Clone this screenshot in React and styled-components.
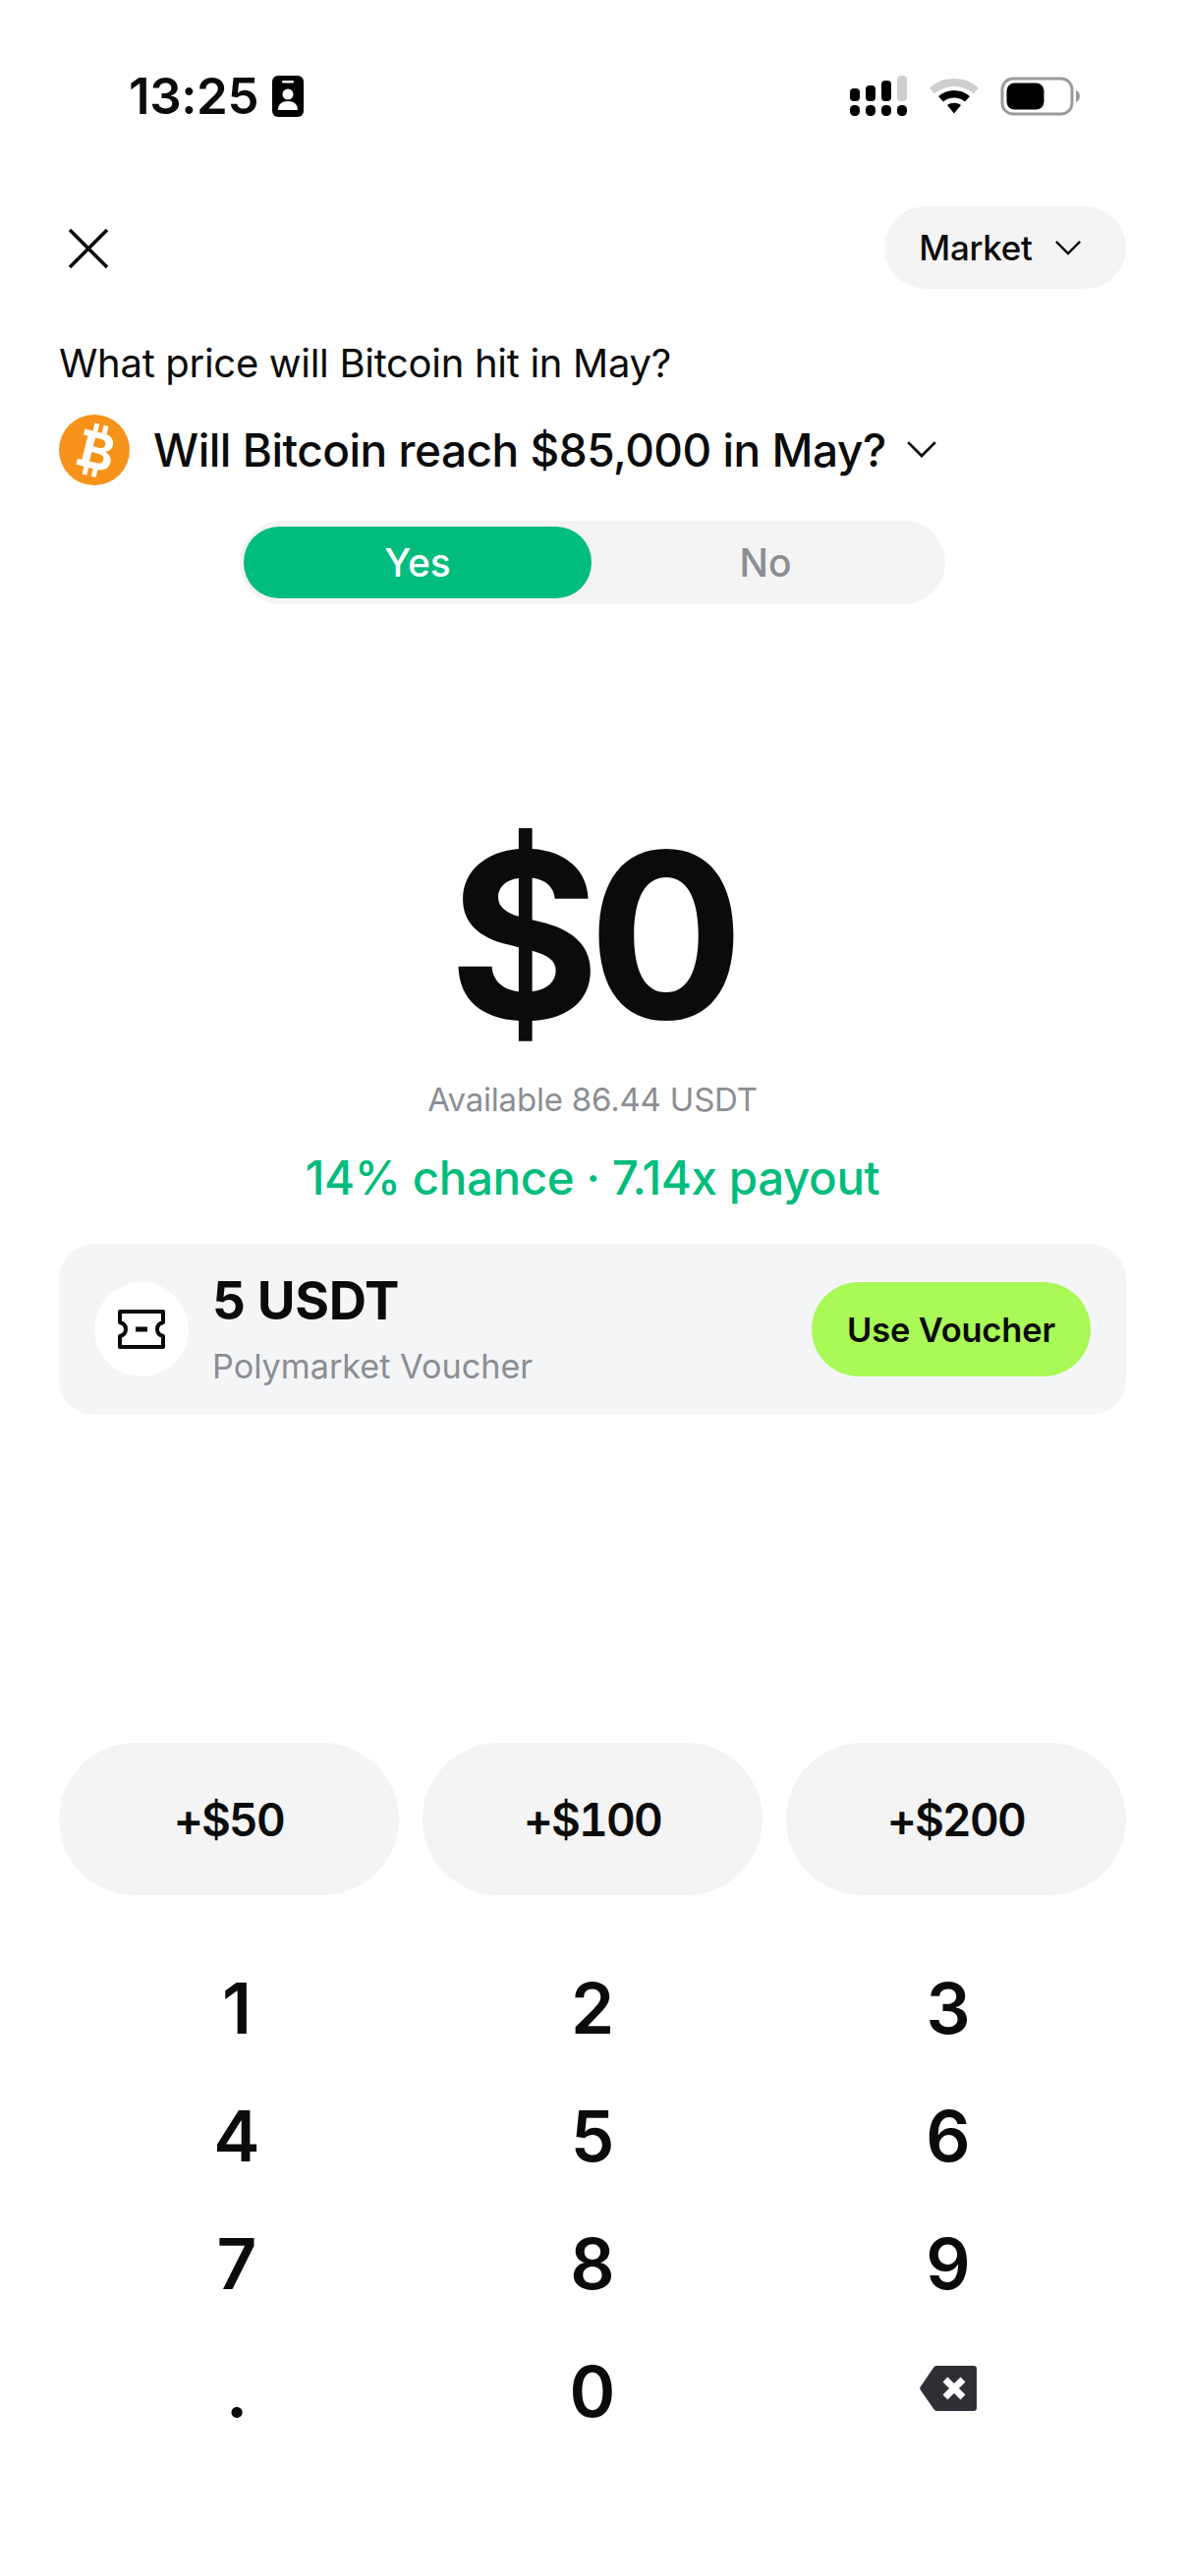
import React from 'react';
import styled, { createGlobalStyle } from 'styled-components';

const GlobalStyle = createGlobalStyle`
  html, body {
    margin: 0;
    padding: 0;
    background: #fff;
    font-family: Inter, "Liberation Sans", sans-serif;
    color: #0b0b0b;
  }
`;

const Page = styled.div`
  width: 1206px;
  height: 2622px;
  overflow: hidden;
  display: flex;
  flex-direction: column;
  background: #fff;
`;

const StatusBar = styled.div`
  height: 76px;
  margin-top: 70px;
  padding: 0 106px 0 131px;
  display: flex;
  align-items: flex-start;
  justify-content: space-between;
`;

const TimeGroup = styled.div`
  display: flex;
  align-items: center;
  gap: 14px;
  height: 56px;
`;

const Time = styled.span`
  font-size: 51px;
  font-weight: 600;
  letter-spacing: -0.4px;
  line-height: 56px;
`;

const StatusIcons = styled.div`
  display: flex;
  align-items: center;
  gap: 22px;
  height: 56px;
`;

const TopRow = styled.div`
  margin-top: 64px;
  padding: 0 60px;
  height: 84px;
  display: flex;
  align-items: center;
  justify-content: space-between;
`;

const CloseButton = styled.button`
  border: 0;
  background: none;
  padding: 0;
  margin-left: 8px;
  margin-top: 2px;
  width: 44px;
  height: 44px;
  display: flex;
`;

const MarketPill = styled.div`
  width: 246px;
  height: 84px;
  box-sizing: border-box;
  padding-right: 10px;
  border-radius: 42px;
  background: #f4f4f4;
  display: flex;
  align-items: center;
  justify-content: center;
  gap: 22px;
  font-size: 35px;
  font-weight: 500;
  letter-spacing: -0.3px;
`;

const Question = styled.div`
  margin-top: 51px;
  padding: 0 60px;
  font-size: 40px;
  line-height: 50px;
  font-weight: 400;
  letter-spacing: -0.3px;
`;

const TitleRow = styled.div`
  margin-top: 27px;
  padding: 0 60px;
  height: 72px;
  display: flex;
  align-items: center;
`;

const CoinIcon = styled.div`
  width: 72px;
  height: 72px;
  border-radius: 50%;
  background: #f7931a;
  display: flex;
  align-items: center;
  justify-content: center;
  color: #fff;
`;

const Title = styled.span`
  margin-left: 24px;
  margin-right: 20px;
  font-size: 46px;
  font-weight: 500;
  letter-spacing: -0.5px;
`;

const Toggle = styled.div`
  margin: 36px auto 0;
  width: 718px;
  height: 85px;
  box-sizing: border-box;
  padding: 6px 4px;
  border-radius: 43px;
  background: #f4f4f4;
  display: flex;
`;

const ToggleOption = styled.div`
  width: 354px;
  border-radius: 36px;
  display: flex;
  align-items: center;
  justify-content: center;
  font-size: 39px;
  font-weight: 500;
  background: ${({ $active }) => ($active ? '#00bc7d' : 'transparent')};
  color: ${({ $active }) => ($active ? '#fff' : '#8b8e92')};
`;

const Amount = styled.div`
  margin-top: 208px;
  height: 258px;
  padding-right: 4px;
  text-align: center;
  font-size: 235px;
  line-height: 258px;
  font-weight: 680;
  letter-spacing: -12px;
`;

const Available = styled.div`
  margin-top: 16px;
  text-align: center;
  font-size: 33px;
  line-height: 44px;
  color: #8b8e92;
  letter-spacing: -0.2px;
`;

const Chance = styled.div`
  margin-top: 30px;
  text-align: center;
  font-size: 47.5px;
  line-height: 56px;
  font-weight: 500;
  color: #00bc7d;
  letter-spacing: -0.4px;
`;

const VoucherCard = styled.div`
  margin: 39px 60px 0;
  height: 174px;
  box-sizing: border-box;
  padding: 0 36px;
  border-radius: 36px;
  background: #f4f5f7;
  display: flex;
  align-items: center;
`;

const VoucherIcon = styled.div`
  width: 96px;
  height: 96px;
  border-radius: 50%;
  background: #fff;
  display: flex;
  align-items: center;
  justify-content: center;
`;

const VoucherText = styled.div`
  margin-left: 24px;
  flex: 1;
  display: flex;
  flex-direction: column;
  gap: 15px;
`;

const VoucherAmount = styled.div`
  font-size: 53px;
  line-height: 60px;
  font-weight: 700;
  letter-spacing: -0.3px;
`;

const VoucherName = styled.div`
  font-size: 34.2px;
  line-height: 44px;
  color: #8b8e92;
`;

const VoucherButton = styled.button`
  width: 284px;
  height: 96px;
  border: 0;
  border-radius: 48px;
  background: #a9f957;
  color: #0b0b0b;
  font-family: inherit;
  font-size: 34.5px;
  font-weight: 600;
  letter-spacing: -0.2px;
  padding: 0;
`;

const Chips = styled.div`
  margin-top: 334px;
  padding: 0 60px;
  display: grid;
  grid-template-columns: repeat(3, 346px);
  column-gap: 24px;
`;

const Chip = styled.div`
  height: 155px;
  border-radius: 78px;
  background: #f4f4f4;
  display: flex;
  align-items: center;
  justify-content: center;
  font-size: 46px;
  font-weight: 600;
  letter-spacing: -1.8px;
  font-feature-settings: "tnum";
`;

const Keypad = styled.div`
  margin-top: 50px;
  padding: 0 60px;
  display: grid;
  grid-template-columns: repeat(3, 362px);
  grid-auto-rows: 130px;
`;

const Key = styled.div`
  display: flex;
  align-items: center;
  justify-content: center;
  font-size: 71px;
  font-weight: 600;
`;

const BackspaceIcon = styled.svg`
  margin-bottom: 6px;
`;

const Ticket = () => (
  <svg width="50" height="42" viewBox="0 0 50 42" fill="none" stroke="#0b0b0b" strokeWidth="4" strokeLinejoin="round">
    <path d="M3 3h44v11c-4 1-6 4-6 7s2 6 6 7v11H3V28c4-1 6-4 6-7s-2-6-6-7z" />
    <path d="M19 21h12" strokeWidth="5" />
  </svg>
);

const Backspace = () => (
  <BackspaceIcon width="60" height="48" viewBox="0 0 60 48">
    <path d="M18 1h38a3 3 0 0 1 3 3v40a3 3 0 0 1-3 3H19a4 4 0 0 1-3-1L2 26a3 3 0 0 1 0-4L15 3a4 4 0 0 1 3-2z" fill="#2f3035" />
    <path d="M27 15l18 18M45 15L27 33" stroke="#fff" strokeWidth="7" />
  </BackspaceIcon>
);

const BitcoinMark = () => (
  <svg width="50" height="62" viewBox="0 0 24 30" fill="#fff">
    <g transform="rotate(14 12 15)">
      <path fillRule="evenodd" d="M5 6h9.5c3.6 0 5.8 1.7 5.8 4.6 0 2-1.1 3.4-2.9 4 2.3.5 3.8 2.1 3.8 4.5 0 3.3-2.5 5-6.4 5H5v-3h2.2V9H5zm6 3v4.4h3c1.6 0 2.6-.8 2.6-2.2S15.600 9 14 9zm0 7.300V21h3.600c1.800 0 2.900-.9 2.900-2.400s-1.100-2.300-2.900-2.300z" />
      <path d="M9 2h2.400v4H9zM13.600 2H16v4h-2.400zM9 24h2.400v4H9zM13.600 24H16v4h-2.400z" />
    </g>
  </svg>
);

const Chevron = ({ size }) => (
  <svg width={size} height={size * 0.6} viewBox="0 0 30 18" fill="none" stroke="#0b0b0b" strokeWidth="2.6">
    <path d="M2 2l13 13L28 2" />
  </svg>
);

const chips = ['+$50', '+$100', '+$200'];
const keys = ['1', '2', '3', '4', '5', '6', '7', '8', '9', '.', '0'];

const App = () => (
  <Page>
    <GlobalStyle />
    <StatusBar>
      <TimeGroup>
        <Time>13:25</Time>
        <svg width="32" height="42" viewBox="0 0 32 42">
          <rect width="32" height="42" rx="6" fill="#000" />
          <rect x="10" y="5" width="12" height="2.500" rx="1.200" fill="#fff" />
          <circle cx="16" cy="19" r="5.500" fill="#fff" />
          <path d="M6 35c0-6 4-9 10-9s10 3 10 9z" fill="#fff" />
        </svg>
      </TimeGroup>
      <StatusIcons>
        <svg width="60" height="42" viewBox="0 0 60 42">
          <rect x="1" y="13" width="10" height="13" rx="4" fill="#000" />
          <rect x="17" y="10" width="10" height="16" rx="4" fill="#000" />
          <rect x="33" y="5" width="10" height="21" rx="4" fill="#000" />
          <rect x="49" y="0" width="10" height="26" rx="4" fill="#cfcfcf" />
          <rect x="1" y="30" width="10" height="11" rx="4.500" fill="#000" />
          <rect x="17" y="30" width="10" height="11" rx="4.500" fill="#000" />
          <rect x="33" y="30" width="10" height="11" rx="4.500" fill="#000" />
          <rect x="49" y="30" width="10" height="11" rx="4.500" fill="#000" />
        </svg>
        <svg width="50" height="38" viewBox="0 0 50 38">
          <path d="M0 10.500C7 4 15.500 1 25 1s18 3 25 9.500l-5 6C39 11.500 32.500 9 25 9S11 11.500 5 16.500z" fill="#cfcfcf" />
          <path d="M9 19c4.500-4 10-6 16-6s11.500 2 16 6l-5 5.500c-3-2.500-7-4-11-4s-8 1.500-11 4z" fill="#000" />
          <path d="M18 28c2-1.500 4.500-2.300 7-2.300s5 .8 7 2.300l-7 8.500z" fill="#000" />
        </svg>
        <svg width="82" height="40" viewBox="0 0 82 40">
          <rect x="2" y="2" width="71" height="36" rx="11" fill="#fff" stroke="#9b9b9b" strokeWidth="3" />
          <rect x="6.500" y="6.500" width="38" height="27" rx="8" fill="#000" />
          <path d="M77 14c2.500 1 4 3 4 6s-1.500 5-4 6z" fill="#9b9b9b" />
        </svg>
      </StatusIcons>
    </StatusBar>

    <TopRow>
      <CloseButton aria-label="Close">
        <svg width="44" height="44" viewBox="0 0 44 44" stroke="#0b0b0b" strokeWidth="3.600">
          <path d="M3 3l38 38M41 3L3 41" />
        </svg>
      </CloseButton>
      <MarketPill>
        Market
        <Chevron size={28} />
      </MarketPill>
    </TopRow>

    <Question>What price will Bitcoin hit in May?</Question>

    <TitleRow>
      <CoinIcon><BitcoinMark /></CoinIcon>
      <Title>Will Bitcoin reach $85,000 in May?</Title>
      <Chevron size={32} />
    </TitleRow>

    <Toggle>
      <ToggleOption $active>Yes</ToggleOption>
      <ToggleOption>No</ToggleOption>
    </Toggle>

    <Amount>$0</Amount>
    <Available>Available 86.44 USDT</Available>
    <Chance>14% chance · 7.14x payout</Chance>

    <VoucherCard>
      <VoucherIcon><Ticket /></VoucherIcon>
      <VoucherText>
        <VoucherAmount>5 USDT</VoucherAmount>
        <VoucherName>Polymarket Voucher</VoucherName>
      </VoucherText>
      <VoucherButton>Use Voucher</VoucherButton>
    </VoucherCard>

    <Chips>
      {chips.map((chip) => (
        <Chip key={chip}>{chip}</Chip>
      ))}
    </Chips>

    <Keypad>
      {keys.map((key) => (
        <Key key={key}>{key}</Key>
      ))}
      <Key><Backspace /></Key>
    </Keypad>
  </Page>
);

export default App;
